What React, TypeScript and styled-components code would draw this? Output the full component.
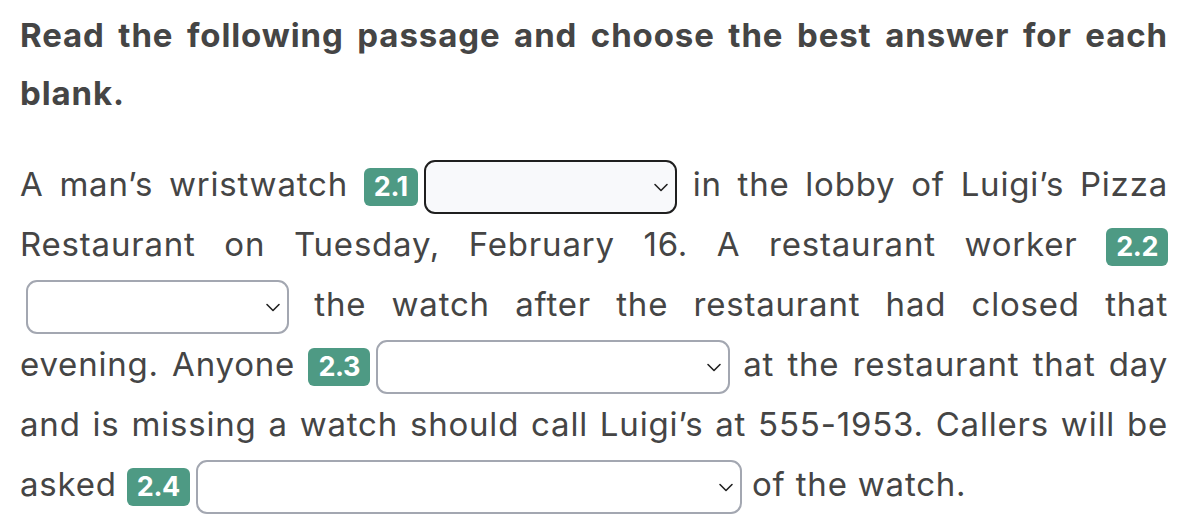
import React from "react";
import styled, { createGlobalStyle } from "styled-components";

const Global = createGlobalStyle`
  html, body { margin: 0; padding: 0; background: #ffffff; }
  body { font-family: Inter, "Noto Sans", sans-serif; color: #454545; }
`;

const Page = styled.div`
  width: 1190px;
  box-sizing: border-box;
  padding: 6px 22px 0 20px;
`;

const Title = styled.h1`
  margin: 0 0 32px 0;
  font-size: 33px;
  font-weight: 700;
  line-height: 58px;
  letter-spacing: 0.9px;
  text-align: justify;
  color: #454545;
`;

const Passage = styled.p`
  margin: 0;
  font-size: 33px;
  font-weight: 400;
  line-height: 60px;
  letter-spacing: 0.8px;
  text-align: justify;
  color: #454545;
`;

const Badge = styled.span`
  display: inline-block;
  vertical-align: middle;
  background: #4e9a84;
  color: #ffffff;
  font-weight: 700;
  font-size: 27px;
  letter-spacing: -0.4px;
  line-height: 38px;
  height: 38px;
  padding: 0 10px;
  border-radius: 6px;
`;

const SelectWrap = styled.span<{ $w: number }>`
  display: inline-block;
  position: relative;
  vertical-align: middle;
  width: ${(p) => p.$w}px;
  height: 54px;
  margin-left: 6px;
`;

const Select = styled.select<{ $focused?: boolean }>`
  appearance: none;
  -webkit-appearance: none;
  display: block;
  width: 100%;
  height: 100%;
  box-sizing: border-box;
  border-radius: 11px;
  border: ${(p) => (p.$focused ? "2px solid #1f1f1f" : "2px solid #a3a7b1")};
  background: ${(p) => (p.$focused ? "#f8f9fb" : "#ffffff")};
  font-family: inherit;
  font-size: 24px;
  padding: 0 40px 0 12px;
  outline: none;
`;

const Chevron = styled.svg`
  position: absolute;
  right: 8px;
  top: 50%;
  width: 16px;
  height: 9px;
  margin-top: -4px;
  pointer-events: none;
`;

function Blank({ n, w, focused }: { n: string; w: number; focused?: boolean }) {
  return (
    <>
      <Badge>{n}</Badge>
      <SelectWrap $w={w}>
        <Select $focused={focused} defaultValue="">
          <option value=""></option>
        </Select>
        <Chevron viewBox="0 0 16 9">
          <path d="M2 1.5 L8 7.5 L14 1.5" fill="none" stroke="#222" strokeWidth="1.6" strokeLinecap="round" strokeLinejoin="round" />
        </Chevron>
      </SelectWrap>
    </>
  );
}

export default function App() {
  return (
    <Page>
      <Global />
      <Title>Read the following passage and choose the best answer for each blank.</Title>
      <Passage>
        A man’s wristwatch <Blank n="2.1" w={253} focused /> in the lobby of Luigi’s Pizza Restaurant on
        Tuesday, February 16. A restaurant worker <Blank n="2.2" w={263} /> the watch after the restaurant
        had closed that evening. Anyone <Blank n="2.3" w={354} /> at the restaurant that day and is missing
        a watch should call Luigi’s at 555-1953. Callers will be asked <Blank n="2.4" w={546} /> of the watch.
      </Passage>
    </Page>
  );
}
